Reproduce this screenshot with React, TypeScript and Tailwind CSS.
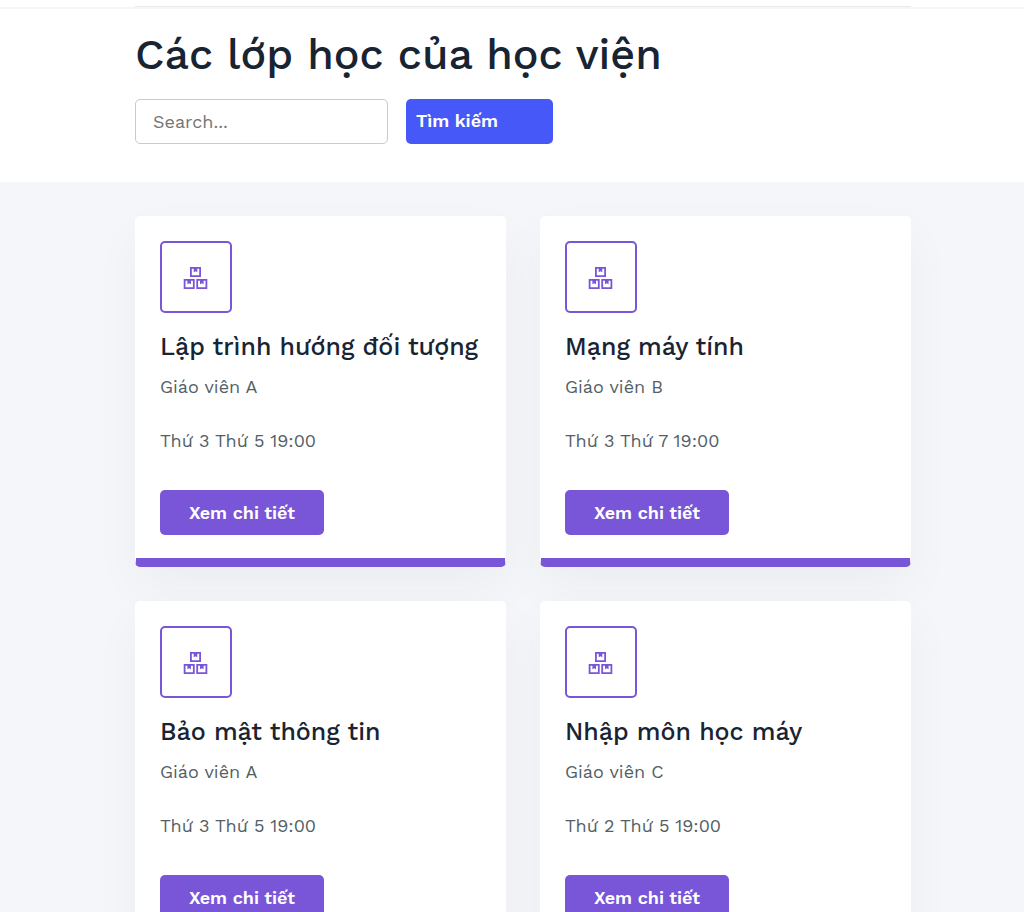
type Course = {
  title: string;
  teacher: string;
  schedule: string;
};

const courses: Course[] = [
  { title: "Lập trình hướng đối tượng", teacher: "Giáo viên A", schedule: "Thứ 3 Thứ 5 19:00" },
  { title: "Mạng máy tính", teacher: "Giáo viên B", schedule: "Thứ 3 Thứ 7 19:00" },
  { title: "Bảo mật thông tin", teacher: "Giáo viên A", schedule: "Thứ 3 Thứ 5 19:00" },
  { title: "Nhập môn học máy", teacher: "Giáo viên C", schedule: "Thứ 2 Thứ 5 19:00" },
];

function Box({ x, y }: { x: number; y: number }) {
  return (
    <path
      transform={`translate(${x} ${y})`}
      fillRule="evenodd"
      d="M0 0H11V10H0ZM1.8 1.8V8.2H9.2V1.8H7.3V5.2L5.5 4.2L3.7 5.2V1.8Z"
    />
  );
}

function BoxesIcon() {
  return (
    <svg width="26" height="22" viewBox="0 0 26 22" fill="currentColor" aria-hidden="true">
      <Box x={7} y={0} />
      <Box x={0.7} y={12} />
      <Box x={13.3} y={12} />
    </svg>
  );
}

function CourseCard({ title, teacher, schedule }: Course) {
  return (
    <article className="rounded-[5px] border border-b-[9px] border-white border-b-[#7856d7] bg-white px-6 pt-6 pb-[23px] shadow-[0_20px_50px_rgba(0,0,0,0.04)]">
      <div className="flex size-[72px] items-center justify-center rounded-[5px] border-2 border-[#7856d7] pt-0.5 text-[#7856d7]">
        <BoxesIcon />
      </div>
      <h2 className="mt-4 text-[25px] leading-9 font-medium text-[#192433]">{title}</h2>
      <p className="mt-2 text-[18px] leading-7 text-[#535f67]">{teacher}</p>
      <p className="mt-[26px] text-[18px] leading-7 text-[#535f67]">{schedule}</p>
      <button
        type="button"
        className="mt-[35px] block h-[45px] w-[164px] rounded-[5px] bg-[#7856d7] text-[18px] font-semibold text-white"
      >
        Xem chi tiết
      </button>
    </article>
  );
}

export default function App() {
  return (
    <div className="min-h-screen bg-[#f4f6fa] font-['Work_Sans','Inter',sans-serif]">
      <div className="bg-white pt-1.5 pr-[113px] pl-[135px]">
        <div className="border-t border-[#e6eaea]" />
      </div>
      <header className="mt-0.5 bg-white pt-[21px] pr-[113px] pb-[38px] pl-[135px]">
        <h1 className="text-[43px] leading-[48px] font-medium text-[#192433]">Các lớp học của học viện</h1>
        <form className="mt-[21px] flex gap-[18px]" onSubmit={(e) => e.preventDefault()}>
          <input
            type="text"
            aria-label="Search"
            placeholder="Search..."
            className="h-[45px] w-[253px] rounded-[5px] border border-[#c9c8d4] px-[17px] text-[18px] outline-none placeholder:text-[#757575]"
          />
          <button
            type="submit"
            className="h-[45px] w-[147px] rounded-[5px] bg-[#4659f8] px-2.5 pb-0.5 text-left text-[18px] font-semibold text-white"
          >
            Tìm kiếm
          </button>
        </form>
      </header>
      <main className="grid grid-cols-2 gap-[34px] pt-[34px] pr-[113px] pl-[135px]">
        {courses.map((course) => (
          <CourseCard key={course.title} {...course} />
        ))}
      </main>
    </div>
  );
}
